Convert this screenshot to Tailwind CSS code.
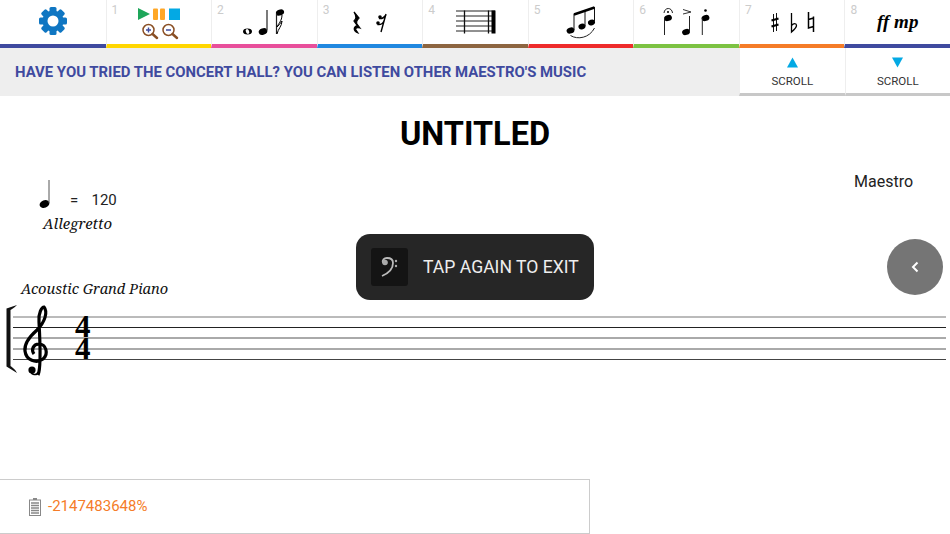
<!DOCTYPE html>
<html lang="en">
<head>
    <meta charset="UTF-8">
    <meta name="viewport" content="width=device-width, initial-scale=1.0">
    <title>Score</title>
    <script src="https://cdn.jsdelivr.net/npm/@tailwindcss/browser@4"></script>
</head>
<body class="bg-white font-['Roboto',sans-serif]">
<div class="relative w-[950px] h-[534px] overflow-hidden flex flex-col">

    <!-- toolbar -->
    <div class="grid grid-cols-9 h-12 shrink-0">
        <div class="border-b-4 border-[#3f4a9f] flex items-center justify-center">
            <svg width="30" height="30" viewBox="0 0 30 30" class="mt-[-3px]">
                <g fill="#0f76c2">
                    <circle cx="15" cy="15" r="10.5"/>
                    <rect x="11.5" y="1" width="7" height="28" rx="1.5"/>
                    <rect x="11.5" y="1" width="7" height="28" rx="1.5" transform="rotate(45 15 15)"/>
                    <rect x="11.5" y="1" width="7" height="28" rx="1.5" transform="rotate(90 15 15)"/>
                    <rect x="11.5" y="1" width="7" height="28" rx="1.5" transform="rotate(135 15 15)"/>
                </g>
                <circle cx="15" cy="15" r="5.5" fill="#fff"/>
            </svg>
        </div>
        <div class="relative border-b-4 border-[#ffd600] border-l border-l-[#eee]">
            <span class="absolute left-[5px] top-[2px] text-xs text-[#ccc]">1</span>
            <svg width="105" height="44" viewBox="0 0 105 44">
                <path d="M31 8 L43 14 L31 20Z" fill="#1ea65a"/>
                <rect x="46" y="8.500" width="5" height="11.500" rx="1" fill="#ffa726"/>
                <rect x="53" y="8.500" width="5" height="11.500" rx="1" fill="#ffa726"/>
                <rect x="62" y="8.500" width="11" height="11.500" fill="#03a9e4"/>
                <g fill="none" stroke="#8a4f24">
                    <circle cx="41.500" cy="30" r="5.500" stroke-width="1.500"/>
                    <path d="M45.500 34 L50 38" stroke-width="2.500" stroke-linecap="round"/>
                    <circle cx="61.500" cy="30" r="5.500" stroke-width="1.500"/>
                    <path d="M65.500 34 L70 38" stroke-width="2.500" stroke-linecap="round"/>
                </g>
                <path d="M39 30 H44 M41.500 27.500 V32.500 M59 30 H64" stroke="#3f4a9f" stroke-width="1.400"/>
            </svg>
        </div>
        <div class="relative border-b-4 border-[#e84f9b] border-l border-l-[#eee]">
            <span class="absolute left-[5px] top-[2px] text-xs text-[#ccc]">2</span>
            <svg width="105" height="44" viewBox="0 0 105 44">
                <ellipse cx="35.500" cy="31.500" rx="4.500" ry="3" fill="#000"/>
                <ellipse cx="35.500" cy="31.500" rx="1.600" ry="2.500" fill="#fff" transform="rotate(-25 35.500 31.500)"/>
                <ellipse cx="51" cy="31.500" rx="4.400" ry="3.200" fill="#000" transform="rotate(-20 51 31.500)"/>
                <path d="M55 30.500 V10" stroke="#222" stroke-width="1.200"/>
                <ellipse cx="68" cy="12.500" rx="4.200" ry="3" fill="#000" transform="rotate(-20 68 12.500)"/>
                <path d="M64.500 13.500 V34" stroke="#222" stroke-width="1.200"/>
                <path d="M65 34 C66 29 70 26 70 21 C68 24 66 26 65 27 M65 27 C66 24 70 21 70 15" fill="none" stroke="#000" stroke-width="1"/>
            </svg>
        </div>
        <div class="relative border-b-4 border-[#2088e0] border-l border-l-[#eee]">
            <span class="absolute left-[5px] top-[2px] text-xs text-[#ccc]">3</span>
            <svg width="105" height="44" viewBox="0 0 105 44">
                <path d="M36 12 L41 18 C39 20 38 22 39 24 L42 28 C39 27 37 28 38 30 L40 33 C36 32 35 28 38 26 L39.500 26 L36 21 C38 19 39 17 36 12Z" fill="#000" stroke="#000" stroke-width="1.200"/>
                <circle cx="62" cy="17" r="1.800" fill="#000"/>
                <circle cx="60" cy="23" r="1.800" fill="#000"/>
                <path d="M68 14 L63 32 M61 18.500 C64 19 66 18 68 15 M59.500 24.500 C62 25 64.500 24 66 21" fill="none" stroke="#000" stroke-width="1.400"/>
            </svg>
        </div>
        <div class="relative border-b-4 border-[#8d6540] border-l border-l-[#eee]">
            <span class="absolute left-[5px] top-[2px] text-xs text-[#ccc]">4</span>
            <svg width="105" height="44" viewBox="0 0 105 44">
                <path d="M33 11 H72 M33 16 H72 M33 21 H72 M33 26 H72 M33 31 H72" stroke="#222" stroke-width="1"/>
                <path d="M41.500 10.500 V33.500 M65.500 10.500 V33.500" stroke="#111" stroke-width="1.300"/>
                <rect x="68.500" y="10.500" width="4" height="23" fill="#000"/>
            </svg>
        </div>
        <div class="relative border-b-4 border-[#ee2b2b] border-l border-l-[#eee]">
            <span class="absolute left-[5px] top-[2px] text-xs text-[#ccc]">5</span>
            <svg width="105" height="44" viewBox="0 0 105 44">
                <ellipse cx="41.500" cy="30.500" rx="4" ry="3" fill="#000" transform="rotate(-20 41.500 30.500)"/>
                <ellipse cx="53" cy="26.500" rx="3.600" ry="2.800" fill="#000" transform="rotate(-20 53 26.500)"/>
                <ellipse cx="62.500" cy="22.500" rx="3.600" ry="2.800" fill="#000" transform="rotate(-20 62.500 22.500)"/>
                <path d="M45 30 V14 M56 26 V10 M65.500 22 V7" stroke="#111" stroke-width="1"/>
                <path d="M45 14.500 L65.500 7.500" stroke="#000" stroke-width="2.400"/>
                <path d="M41.500 35.500 C48.500 40 60.500 38 65.500 28" fill="none" stroke="#222" stroke-width="1"/>
            </svg>
        </div>
        <div class="relative border-b-4 border-[#7cc242] border-l border-l-[#eee]">
            <span class="absolute left-[5px] top-[2px] text-xs text-[#ccc]">6</span>
            <svg width="105" height="44" viewBox="0 0 105 44">
                <path d="M30 13 C30.500 7 38 7 38.500 13" fill="none" stroke="#222" stroke-width="1"/>
                <circle cx="34" cy="12" r="1" fill="#000"/>
                <ellipse cx="34" cy="18" rx="4" ry="3" fill="#000" transform="rotate(-20 34 18)"/>
                <path d="M30.500 18 V35" stroke="#222" stroke-width="1"/>
                <path d="M49 9.500 L57 12 L49 14" fill="none" stroke="#333" stroke-width="1"/>
                <ellipse cx="52" cy="32" rx="4" ry="3" fill="#000" transform="rotate(-20 52 32)"/>
                <path d="M55.500 31 V16" stroke="#222" stroke-width="1"/>
                <circle cx="71.500" cy="10.500" r="1.300" fill="#000"/>
                <ellipse cx="71.500" cy="18" rx="4" ry="3" fill="#000" transform="rotate(-20 71.500 18)"/>
                <path d="M68.300 18 V35" stroke="#222" stroke-width="1"/>
            </svg>
        </div>
        <div class="relative border-b-4 border-[#f57c28] border-l border-l-[#eee]">
            <span class="absolute left-[5px] top-[2px] text-xs text-[#ccc]">7</span>
            <svg width="105" height="44" viewBox="0 0 105 44">
                <path d="M33.500 14 V32 M36.500 13 V31" stroke="#111" stroke-width="1"/>
                <path d="M31.500 20.500 L38.500 18.500 M31.500 26.500 L38.500 24.500" stroke="#000" stroke-width="2.200"/>
                <path d="M51.500 13 V32 C55 29 56.500 27.500 56.500 25.500 C56.500 23 53.500 23 51.500 25.500" fill="none" stroke="#000" stroke-width="1.300"/>
                <path d="M68.500 12 V28 L73.500 26.500 M73.500 16.500 V32 M68.500 19.500 L73.500 18" fill="none" stroke="#000" stroke-width="1.500"/>
            </svg>
        </div>
        <div class="relative border-b-4 border-[#3f4a9f] border-l border-l-[#eee]">
            <span class="absolute left-[5px] top-[2px] text-xs text-[#ccc]">8</span>
            <div class="text-center pt-[10px] font-['Liberation_Serif',serif] italic font-bold text-[19px] leading-6 text-black">ff mp</div>
        </div>
    </div>

    <!-- hint banner -->
    <div class="flex h-12 shrink-0 bg-[#eeeeee]">
        <div class="flex-1 flex items-center pl-[15px] text-[14.900px] font-bold text-[#3f4a9f]">HAVE YOU TRIED THE CONCERT HALL? YOU CAN LISTEN OTHER MAESTRO'S MUSIC</div>
        <div class="w-[105.5px] bg-white border-b-[3px] border-[#c8c8c8] border-l border-l-[#eee] flex flex-col items-center pt-[9px]">
            <svg width="11" height="11" viewBox="0 0 12 11"><path d="M6 0 L12 11 H0Z" fill="#03a9e4"/></svg>
            <span class="text-[11.5px] leading-4 text-[#333] mt-[5px]">SCROLL</span>
        </div>
        <div class="w-[105.5px] bg-white border-b-[3px] border-[#c8c8c8] border-l border-l-[#eee] flex flex-col items-center pt-[9px]">
            <svg width="11" height="11" viewBox="0 0 12 11"><path d="M0 0 H12 L6 11Z" fill="#03a9e4"/></svg>
            <span class="text-[11.5px] leading-4 text-[#333] mt-[5px]">SCROLL</span>
        </div>
    </div>

    <!-- score sheet -->
    <div class="flex-1 relative">
        <h1 class="text-center text-[32.500px] font-bold leading-10 text-black mt-[18px]">UNTITLED</h1>

        <span class="absolute left-[854px] top-[74px] text-base text-[#222]">Maestro</span>

        <svg class="absolute left-[38px] top-[83px]" width="16" height="30" viewBox="0 0 16 30">
            <ellipse cx="6.500" cy="25" rx="5" ry="3.700" fill="#000" transform="rotate(-20 6.500 25)"/>
            <path d="M11 24 V1" stroke="#555" stroke-width="1"/>
        </svg>
        <span class="absolute left-[70px] top-[93px] text-[15px] text-[#222]">=</span>
        <span class="absolute left-[91.500px] top-[93px] text-[15px] text-[#222]">120</span>
        <span class="absolute left-[43px] top-[116px] font-['Noto_Serif','Liberation_Serif',serif] italic text-[15px] text-[#111]">Allegretto</span>
        <span class="absolute left-[21px] top-[182px] font-['Noto_Serif','Liberation_Serif',serif] italic text-[14.600px] text-[#111]">Acoustic Grand Piano</span>

        <!-- staff -->
        <svg class="absolute left-0 top-[204px]" width="950" height="90" viewBox="0 300 950 90">
            <path d="M13 317 H946" stroke="#777" stroke-width="1"/>
            <path d="M13 327.500 H946" stroke="#222" stroke-width="1"/>
            <path d="M13 338 H946 M13 349 H946" stroke="#555" stroke-width="1"/>
            <path d="M13 359.500 H946" stroke="#444" stroke-width="1"/>
            <path d="M17 305 C14 308 12 309 10.500 310 V366 C12 367 15 369 17 373 L6.500 366.500 V308.500Z" fill="#111"/>
            <!-- treble clef -->
            <path d="M38 375 C41 369 40 340 39 322 C38 313 42 307 44 307 C48 312 45 322 37 330 C28 338 24 344 25 351 C26 360 36 364 43 359 C49 354 46 344 39 344 C33 344 31 350 34 354" fill="none" stroke="#000" stroke-width="3.200"/>
            <path d="M38 372 C37 376 31 375 31 371" fill="none" stroke="#000" stroke-width="1.600"/>
            <circle cx="32" cy="370" r="3.600" fill="#000"/>
        </svg>
        <!-- time signature -->
        <div class="absolute left-[75px] top-[220px] font-['Liberation_Serif',serif] font-bold text-[31px] leading-[22px] text-black">4<br>4</div>

        <!-- back button -->
        <div class="absolute left-[887px] top-[143px] w-14 h-14 rounded-full bg-[#757575] flex items-center justify-center">
            <svg width="10" height="14" viewBox="0 0 10 14"><path d="M7.500 2.500 L3 7 L7.500 11.500" fill="none" stroke="#fff" stroke-width="2"/></svg>
        </div>
    </div>

    <!-- toast -->
    <div class="absolute left-[356px] top-[234px] w-[238px] h-[66px] rounded-[14px] bg-[#262626] flex items-center pl-[15px] gap-[15px]">
        <div class="w-[37px] h-[38px] rounded-[3px] bg-[#141414] flex items-center justify-center">
            <svg width="20" height="24" viewBox="0 0 20 24">
                <path d="M2 21 C9 18 13 13 13 8 C13 4 10 3 7 3 C4 3 2 5 3 8" fill="none" stroke="#bbb" stroke-width="1.800"/>
                <circle cx="5" cy="7.500" r="2.800" fill="#aaa"/>
                <circle cx="16" cy="6" r="1.200" fill="#aaa"/>
                <circle cx="16" cy="11" r="1.200" fill="#aaa"/>
            </svg>
        </div>
        <span class="text-[17.600px] text-[#eee] whitespace-nowrap">TAP AGAIN TO EXIT</span>
    </div>

    <!-- status box -->
    <div class="w-[590px] h-[55px] shrink-0 absolute left-0 bottom-0 border border-l-0 border-[#ccc] flex items-center pl-[29px] gap-[7px]">
        <svg width="12" height="18" viewBox="0 0 12 18">
            <rect x="4" y="0" width="4" height="2" fill="#888"/>
            <rect x=".5" y="2" width="11" height="15.500" fill="#fff" stroke="#888"/>
            <path d="M2 5 H10 M2 7.500 H10 M2 10 H10 M2 12.500 H10 M2 15 H10" stroke="#888" stroke-width="1.500"/>
        </svg>
        <span class="text-[15px] text-[#f57c28]">-2147483648%</span>
    </div>
</div>
</body>
</html>
